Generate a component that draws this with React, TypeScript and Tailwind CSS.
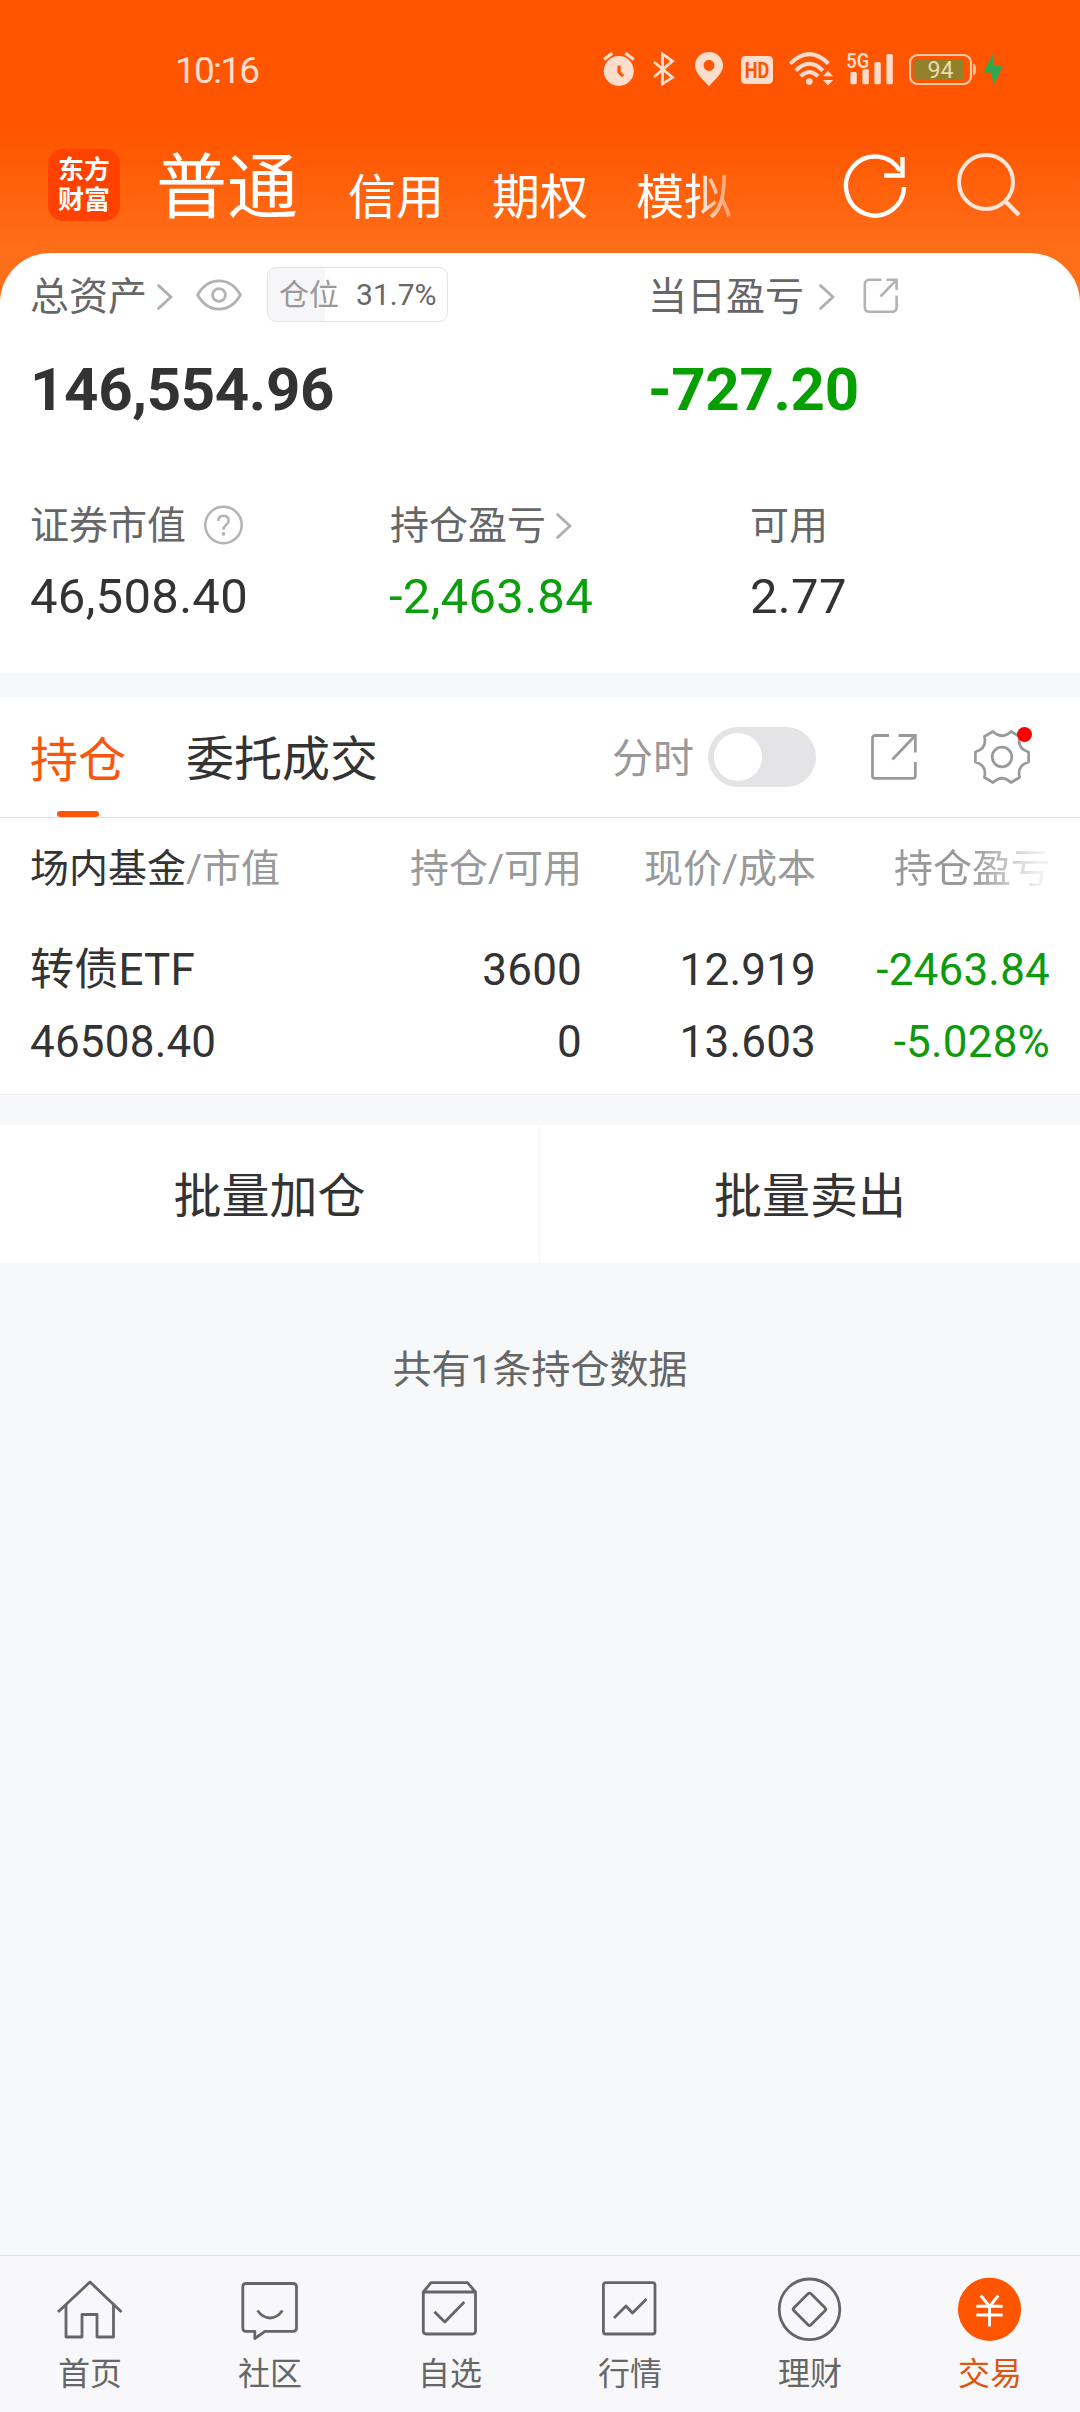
import type { ReactNode } from "react";

const SOFT = "#ffddcc";

function StatusIcons() {
  return (
    <div className="-mt-[2px] flex h-[36px] items-center">
      <svg width="32" height="36" viewBox="0 0 32 36" fill="none">
        <circle cx="15.8" cy="20" r="15" fill={SOFT} />
        <path d="M1 8.6 9.2 2.2M22.4 2.2 30.8 8.6" stroke={SOFT} strokeWidth="3.2" />
        <path d="M16 14.5V21.2L20 25.2" stroke="#ff5500" strokeWidth="3.2" />
      </svg>
      <svg className="ml-[17px]" width="23" height="36" viewBox="0 0 23 36" fill="none">
        <path d="M2 11 20.5 26.3 10.5 33V3L20.5 10 2 26" stroke={SOFT} strokeWidth="2.8" />
      </svg>
      <svg className="ml-[20px]" width="28" height="36" viewBox="0 0 28 36">
        <path
          fill={SOFT}
          fillRule="evenodd"
          d="M14 1C6 1 0 7 0 14.6C0 22 7.5 28 14 35.3C20.5 28 28 22 28 14.6C28 7 22 1 14 1ZM14 8.8a5.4 5.6 0 1 1 0 11.2a5.4 5.6 0 1 1 0-11.2Z"
        />
      </svg>
      <svg className="ml-[18px] overflow-visible" width="32" height="36" viewBox="0 0 32 36">
        <rect x="0" y="5" width="32" height="28" rx="4.5" fill={SOFT} />
        <text x="3.8" y="26.6" fontSize="21.5" fontWeight="700" fontFamily="Roboto, sans-serif" fill="#ff5500" textLength="24.5" lengthAdjust="spacingAndGlyphs">
          HD
        </text>
      </svg>
      <svg className="ml-[15px]" width="46" height="36" viewBox="0 0 46 36" fill="none">
        <path d="M2.2 12.6Q21.3-6.2 40.4 12.6" stroke={SOFT} strokeWidth="4" />
        <path d="M7.8 19.6Q21.3 6 34.8 19.6" stroke={SOFT} strokeWidth="4" />
        <path d="M12.6 25.2Q21.3 16.8 30 25.2" stroke={SOFT} strokeWidth="4" />
        <circle cx="21.3" cy="30.6" r="3.3" fill={SOFT} />
        <path d="M35 25.2 40 19.8 45 25.2ZM35 29H45L40 34.4Z" fill={SOFT} />
      </svg>
      <svg className="ml-[13px] overflow-visible" width="47" height="36" viewBox="0 0 47 36">
        <text x="-0.8" y="16.6" fontSize="21" fontWeight="600" fontFamily="Roboto, sans-serif" fill={SOFT} textLength="23" lengthAdjust="spacingAndGlyphs">
          5G
        </text>
        <rect x="3.4" y="21" width="6.4" height="12.2" rx="1.5" fill={SOFT} />
        <rect x="15.4" y="18" width="6.4" height="15.2" rx="1.5" fill={SOFT} />
        <rect x="27.4" y="11" width="6.4" height="22.2" rx="1.5" fill={SOFT} />
        <rect x="39.4" y="3" width="6.4" height="30.2" rx="1.5" fill={SOFT} />
      </svg>
      <svg className="ml-[15px]" width="67" height="36" viewBox="0 0 67 36">
        <rect x="1" y="4" width="61" height="29" rx="7.5" fill="none" stroke="#ffc9a6" strokeWidth="2.2" />
        <rect x="5.2" y="8.6" width="49.6" height="20" rx="2.5" fill="#93802a" />
        <path d="M64 13H65.4Q66.8 14 66.8 18.5T65.4 24H64Z" fill="#ffc9a6" />
        <text x="31.4" y="26.8" textAnchor="middle" fontSize="24" fontFamily="Roboto, sans-serif" fill="#eadcae" textLength="26" lengthAdjust="spacingAndGlyphs">
          94
        </text>
      </svg>
      <svg className="ml-[7px]" width="20" height="36" viewBox="0 0 20 36">
        <path d="M10 2.8 0.4 21.4H8.2L10.6 34.6 19.8 14.6H11.4Z" fill="#2fa84f" />
      </svg>
    </div>
  );
}

function Chevron({ className = "" }: { className?: string }) {
  return (
    <svg className={className} width="16" height="28" viewBox="0 0 16 28" fill="none" stroke="#b0b0b0" strokeWidth="2.8" strokeLinecap="round">
      <path d="M1.6 2.6 14 14 1.6 25.4" />
    </svg>
  );
}

function EyeIcon() {
  return (
    <svg className="-mt-[5px] ml-[23px]" width="46" height="32" viewBox="0 0 46 32" fill="none" stroke="#b3b3b3" strokeWidth="2.8">
      <path d="M1.6 16C7 6.5 14.5 1.9 23 1.9S39 6.5 44.4 16C39 25.5 31.5 30.1 23 30.1S7 25.5 1.6 16Z" />
      <circle cx="23" cy="16" r="6.4" />
    </svg>
  );
}

function SmallExport() {
  return (
    <svg className="-mt-[3px] ml-[28px]" width="36" height="36" viewBox="0 0 36 36" fill="none" stroke="#b3b3b3" strokeWidth="2.6">
      <path d="M18.5 1.8H6.5Q1.8 1.8 1.8 6.5V29Q1.8 33.8 6.5 33.8H29Q33.6 33.8 33.6 29V17.5" />
      <path d="M23.5 1.8H33.6V12M33 2.4 17.5 18.5" />
    </svg>
  );
}

function HelpIcon() {
  return (
    <svg className="-mt-[2px] ml-[18px]" width="40" height="40" viewBox="0 0 40 40" fill="none" stroke="#b3b3b3" strokeWidth="2.5">
      <circle cx="19.5" cy="20" r="18.2" />
      <path d="M14.3 16Q14.5 10.8 19.5 10.8T24.7 15.6Q24.7 18 22.1 20T19.5 24.8" />
      <circle cx="19.5" cy="28.8" r="1.9" fill="#b3b3b3" stroke="none" />
    </svg>
  );
}

function ExportIcon() {
  return (
    <svg className="ml-[54px]" width="48" height="48" viewBox="0 0 48 48" fill="none" stroke="#9a9a9a" strokeWidth="2.8">
      <path d="M19 2.5H5Q2.500 2.500 2.500 5V43Q2.500 45.300 5 45.300H43Q45.300 45.300 45.300 43V29" />
      <path d="M28.5 2.5H45.3V19.5M44.8 3 22.4 26.5" />
    </svg>
  );
}

function GearIcon() {
  return (
    <div className="relative ml-[55px] h-[58px] w-[58px]">
      <svg width="58" height="58" viewBox="-29 -29 58 58" fill="none" stroke="#9a9a9a" strokeWidth="2.7" strokeLinejoin="round">
        <path d="M-9-25.5Q0-17 9-25.5L17.6-20.5Q14.7-8.5 26.600-5V5Q14.700 8.500 17.600 20.500L9 25.500Q0 17-9 25.500L-17.600 20.500Q-14.700 8.500-26.600 5V-5Q-14.700-8.500-17.600-20.500Z" />
        <circle r="9.8" />
      </svg>
      <span className="absolute top-[-1px] right-[-1px] h-[15px] w-[15px] rounded-full bg-[#fe0000]" />
    </div>
  );
}

function NavItem({ label, active = false, children }: { label: string; active?: boolean; children: ReactNode }) {
  return (
    <div className={active ? "flex flex-1 flex-col items-center text-[#dd5510]" : "flex flex-1 flex-col items-center text-[#666666]"}>
      <svg className="mt-[20px]" width="70" height="68" viewBox="0 0 70 68" fill="none" stroke="#666666" strokeWidth="2.8" strokeLinejoin="round">
        {children}
      </svg>
      <span className="mt-[10px] text-[32px] leading-[40px]">{label}</span>
    </div>
  );
}

export default function App() {
  return (
    <div className="flex h-[2412px] w-[1080px] flex-col overflow-hidden bg-[#f7f8fa] font-[Roboto,'Noto_Sans_CJK_SC',sans-serif] text-[#333333]">
      <div className="bg-[linear-gradient(#ff5500_0px,#ff5500_132px,#ff6e19_250px,#ff6e19_310px)]">
        <header className="h-[253px] text-white">
          <div className="flex h-[140px] items-center pl-[175px]">
            <span className="mt-[2px] w-[428px] text-[37px] leading-[44px] tracking-[-1.8px] text-[#ffddcc]">10:16</span>
            <StatusIcons />
          </div>
          <div className="flex h-[113px] items-start">
            <div className="mt-[9px] ml-[48px] flex h-[72px] w-[72px] flex-col items-center justify-center rounded-[15px] bg-[#ff4200] text-[26px] leading-[30px] font-bold">
              <span className="-mt-[1px]">东方</span>
              <span>财富</span>
            </div>
            <nav className="ml-[36px] flex w-[630px] items-start gap-[48px] text-[48px] leading-[96px] whitespace-nowrap">
              <span className="text-[71px]">普通</span>
              <span className="mt-[10px] ml-[2px]">信用</span>
              <span className="mt-[10px]">期权</span>
              <span className="mt-[10px] [mask-image:linear-gradient(90deg,#000_58%,rgba(0,0,0,0.35)_100%)]">模拟</span>
            </nav>
            <svg className="mt-[12px] ml-[56px]" width="66" height="68" viewBox="0 0 66 68" fill="none" stroke="#ffffff" strokeWidth="4.4">
              <path d="M62 35A29 29.5 0 1 1 58 19" />
              <path d="M60.5 5V23.500H42" />
            </svg>
            <svg className="mt-[12px] ml-[47px]" width="68" height="68" viewBox="0 0 68 68" fill="none" stroke="#ffe6d9" strokeWidth="4">
              <circle cx="31" cy="30" r="27" />
              <path d="M50 49 64 63" strokeWidth="4.4" />
            </svg>
          </div>
        </header>

        <section className="h-[420px] rounded-t-[50px] bg-white px-[30px] text-[39px] leading-[46px] text-[#666666]">
          <div className="flex h-[88px] items-center">
            <div className="flex w-[618px] items-center">
              <span>总资产</span>
              <Chevron className="ml-[10px]" />
              <EyeIcon />
              <div className="-mt-[5px] ml-[25px] flex h-[55px] w-[181px] items-center rounded-[9px] border border-[#e4e4e6] bg-[linear-gradient(90deg,#f6f6f9_32%,#ffffff_32%)] pl-[11px] text-[30px]">
                <span className="text-[#999999]">仓位</span>
                <span className="ml-[17px]">31.7%</span>
              </div>
            </div>
            <span>当日盈亏</span>
            <Chevron className="ml-[15px]" />
            <SmallExport />
          </div>
          <div className="mt-[14px] flex h-[70px] items-center text-[60px] font-bold tracking-[-0.35px]">
            <span className="w-[618px] text-[#333333]">146,554.96</span>
            <span className="text-[#05a000]">-727.20</span>
          </div>
          <div className="mt-[76px] flex h-[50px] items-center">
            <div className="flex w-[360px] items-center">
              <span>证券市值</span>
              <HelpIcon />
            </div>
            <div className="flex w-[360px] items-center">
              <span>持仓盈亏</span>
              <Chevron className="ml-[10px]" />
            </div>
            <span>可用</span>
          </div>
          <div className="mt-[16px] flex h-[60px] items-center text-[49px] tracking-[0.3px] text-[#333333]">
            <span className="w-[359px]">46,508.40</span>
            <span className="w-[361px] text-[#0d9e0d]">-2,463.84</span>
            <span>2.77</span>
          </div>
        </section>
      </div>

      <section className="mt-[24px] bg-white">
        <div className="flex h-[121px] items-center border-b border-[#dfdfdf] pl-[30px]">
          <div className="flex h-[120px] w-[96px] flex-col items-center text-[48px] leading-[60px] text-[#f9560c]">
            <span className="mt-[34px]">持仓</span>
            <span className="mt-[20px] h-[6px] w-[42px] rounded-full bg-[#fd5608]" />
          </div>
          <span className="mt-[5px] ml-[60px] text-[48px] leading-[60px]">委托成交</span>
          <span className="mt-[3px] ml-[234px] text-[41px] leading-[60px] text-[#999999]">分时</span>
          <div className="ml-[14px] flex h-[60px] w-[108px] items-center rounded-full bg-[#e4e4e6] pl-[6px]">
            <span className="h-[48px] w-[48px] rounded-full bg-white" />
          </div>
          <ExportIcon />
          <GearIcon />
        </div>

        <div className="border-b border-[#ececee] px-[30px]">
          <div className="grid h-[102px] grid-cols-[318px_234px_234px_234px] items-center text-[39px] leading-[46px] whitespace-nowrap text-[#999999]">
            <span>
              <span className="text-[#333333]">场内基金</span>/市值
            </span>
            <span className="text-right">持仓/可用</span>
            <span className="text-right">现价/成本</span>
            <span className="ml-[78px] w-[157px] [mask-image:linear-gradient(90deg,#000_50%,rgba(0,0,0,0.15)_92%)]">持仓盈亏</span>
          </div>
          <div className="grid h-[174px] grid-cols-[318px_234px_234px_234px] content-start pt-[14px] text-[44px] leading-[72px] tracking-[0.2px] whitespace-nowrap">
            <span className="pt-[1px] leading-[71px]">转债ETF</span>
            <span className="text-right">3600</span>
            <span className="text-right">12.919</span>
            <span className="text-right text-[#0d9a0d]">-2463.84</span>
            <span>46508.40</span>
            <span className="text-right">0</span>
            <span className="text-right">13.603</span>
            <span className="text-right text-[#0d9a0d]">-5.028%</span>
          </div>
        </div>
      </section>

      <section className="mt-[30px] flex h-[138px] bg-white text-center text-[48px] leading-[144px]">
        <span className="w-[540px] border-r border-[#f4f5f7]">批量加仓</span>
        <span className="flex-1">批量卖出</span>
      </section>

      <p className="mt-[84px] text-center text-[39px] leading-[46px] text-[#666666]">共有1条持仓数据</p>

      <nav className="mt-auto flex h-[157px] border-t border-[#e0e3e6] bg-[#f8f8fb]">
        <NavItem label="首页">
          <path d="M3 36 35 6 66.5 36" />
          <path d="M11 29V61H27V38.5H42V61H58.5V29" />
        </NavItem>
        <NavItem label="社区">
          <path d="M11 7.5H58Q61.5 7.5 61.5 11V52Q61.5 55.3 58 55.3H30L19.8 62.5V55.3H11Q7.8 55.3 7.8 52V11Q7.8 7.5 11 7.5Z" />
          <path d="M22.5 34.5Q28 42 35 42T47.5 34.5" />
        </NavItem>
        <NavItem label="自选">
          <path d="M8.3 16 16 6.7H52.5L60.5 16V55Q60.5 58 57.5 58H11.3Q8.3 58 8.3 55ZM8.3 16H60.5" />
          <path d="M19.5 35.7 29.8 46 49.3 26" />
        </NavItem>
        <NavItem label="行情">
          <rect x="8.4" y="6.7" width="51.6" height="51.3" rx="2.5" />
          <path d="M19 42 31 30 37.5 37 51.5 23" />
        </NavItem>
        <NavItem label="理财">
          <circle cx="34.5" cy="33.3" r="30.3" />
          <path d="M33 17.8Q34.5 16.4 36 17.8L50 31.8Q51.5 33.3 50 34.8L36 48.8Q34.5 50.3 33 48.8L19 34.8Q17.5 33.3 19 31.8Z" />
        </NavItem>
        <NavItem label="交易" active>
          <circle cx="34.5" cy="33.3" r="31.6" fill="#ff5500" stroke="none" />
          <path d="M25.8 19.5 34.5 30.5 43.3 19.5M21.3 30.3H47.7M21.3 39H47.7M34.5 30V50.5" stroke="#ffffff" strokeWidth="2.9" />
        </NavItem>
      </nav>
    </div>
  );
}
